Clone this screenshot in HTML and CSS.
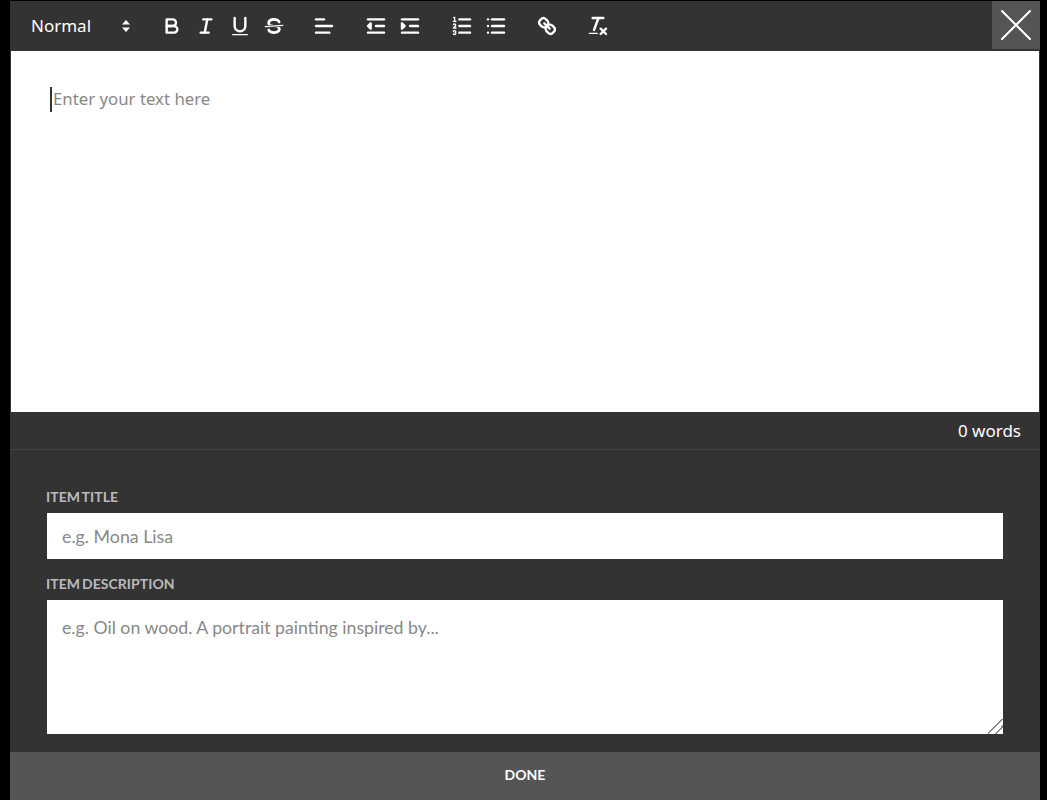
FILE: index.html
```html
<!DOCTYPE html>
<html lang="en">
<head>
<meta charset="utf-8">
<title>Item editor</title>
<link rel="stylesheet" href="styles.css">
</head>
<body>
<main class="modal">
  <div class="toolbar">
    <div class="picker"><span class="picker-label">Normal</span>
      <svg class="picker-arrows" viewBox="0 0 10 14"><path d="M5 1l4 4.5H1zM5 13L1 8.5h8z"/></svg>
    </div>
    <div class="group group-first">
      <button class="tool" aria-label="Bold"><svg viewBox="0 0 18 18"><path d="M5,4H9.5A2.5,2.5,0,0,1,12,6.5v0A2.5,2.5,0,0,1,9.5,9H5A0,0,0,0,1,5,9V4A0,0,0,0,1,5,4Z"/><path d="M5,9h5.5A2.5,2.5,0,0,1,13,11.5v0A2.5,2.5,0,0,1,10.5,14H5a0,0,0,0,1,0,0V9A0,0,0,0,1,5,9Z"/></svg></button>
      <button class="tool" aria-label="Italic"><svg viewBox="0 0 18 18"><line x1="7" x2="13" y1="4" y2="4"/><line x1="5" x2="11" y1="14" y2="14"/><line x1="8" x2="10" y1="14" y2="4"/></svg></button>
      <button class="tool" aria-label="Underline"><svg viewBox="0 0 18 18"><path d="M5,3V9a4.012,4.012,0,0,0,4,4H9a4.012,4.012,0,0,0,4-4V3"/><rect class="fill" height="1" rx=".5" ry=".5" width="12" x="3" y="15"/></svg></button>
      <button class="tool" aria-label="Strike"><svg viewBox="0 0 18 18"><line class="thin" x1="15.5" x2="2.5" y1="8.5" y2="9.5"/><path class="fill" d="M9.007,8C6.542,7.791,6,7.519,6,6.5,6,5.792,7.283,5,9,5c1.571,0,2.765.679,2.969,1.309a1,1,0,0,0,1.9-.617C13.356,4.106,11.354,3,9,3,6.2,3,4,4.538,4,6.5a3.2,3.2,0,0,0,.5,1.843Z"/><path class="fill" d="M8.984,10C11.457,10.208,12,10.479,12,11.5c0,.708-1.283,1.5-3,1.5-1.571,0-2.765-.679-2.969-1.309a1,1,0,1,0-1.9.617C4.644,13.894,6.646,15,9,15c2.8,0,5-1.538,5-3.5a3.2,3.2,0,0,0-.5-1.843Z"/></svg></button>
    </div>
    <div class="group">
      <button class="tool" aria-label="Align"><svg viewBox="0 0 18 18"><line x1="3" x2="15" y1="9" y2="9"/><line x1="3" x2="13" y1="14" y2="14"/><line x1="3" x2="9" y1="4" y2="4"/></svg></button>
    </div>
    <div class="group">
      <button class="tool" aria-label="Outdent"><svg viewBox="0 0 18 18"><line x1="3" x2="15" y1="14" y2="14"/><line x1="3" x2="15" y1="4" y2="4"/><line x1="9" x2="15" y1="9" y2="9"/><polyline class="solid" points="5 7 5 11 3 9 5 7"/></svg></button>
      <button class="tool" aria-label="Indent"><svg viewBox="0 0 18 18"><line x1="3" x2="15" y1="14" y2="14"/><line x1="3" x2="15" y1="4" y2="4"/><line x1="9" x2="15" y1="9" y2="9"/><polyline class="solid" points="3 7 3 11 5 9 3 7"/></svg></button>
    </div>
    <div class="group group-lists">
      <button class="tool" aria-label="Ordered list"><svg viewBox="0 0 18 18"><line x1="7" x2="15" y1="4" y2="4"/><line x1="7" x2="15" y1="9" y2="9"/><line x1="7" x2="15" y1="14" y2="14"/><line class="thin" x1="2.5" x2="4.5" y1="5.5" y2="5.5"/><path class="fill" d="M3.5,6A0.5,0.5,0,0,1,3,5.5V3.085l-0.276.138A0.5,0.5,0,0,1,2.053,3c-0.124-.247-0.023-0.324.224-0.447l1-.5A0.5,0.5,0,0,1,4,2.5v3A0.5,0.5,0,0,1,3.5,6Z"/><path class="thin" d="M4.5,10.5h-2c0-.234,1.85-1.076,1.85-2.234A0.959,0.959,0,0,0,2.5,8.156"/><path class="thin" d="M2.5,14.846a0.959,0.959,0,0,0,1.85-.109A0.7,0.7,0,0,0,3.75,14a0.688,0.688,0,0,0,.6-0.736,0.959,0.959,0,0,0-1.85-.109"/></svg></button>
      <button class="tool" aria-label="Bullet list"><svg viewBox="0 0 18 18"><line x1="6" x2="15" y1="4" y2="4"/><line x1="6" x2="15" y1="9" y2="9"/><line x1="6" x2="15" y1="14" y2="14"/><line x1="3" x2="3" y1="4" y2="4"/><line x1="3" x2="3" y1="9" y2="9"/><line x1="3" x2="3" y1="14" y2="14"/></svg></button>
    </div>
    <div class="group group-link">
      <button class="tool" aria-label="Link"><svg viewBox="0 0 18 18"><line x1="7" x2="11" y1="7" y2="11"/><path d="M8.9,4.577a3.476,3.476,0,0,1,.36,4.679A3.476,3.476,0,0,1,4.577,8.9C3.185,7.5,2.035,6.4,4.217,4.217S7.5,3.185,8.9,4.577Z"/><path d="M13.423,9.1a3.476,3.476,0,0,0-4.679-.36,3.476,3.476,0,0,0,.36,4.679c1.392,1.392,2.5,2.542,4.679.36S14.815,10.5,13.423,9.1Z"/></svg></button>
    </div>
    <div class="group">
      <button class="tool" aria-label="Clear formatting"><svg viewBox="0 0 18 18"><line x1="5" x2="13" y1="3" y2="3"/><line x1="6" x2="9.35" y1="12" y2="3"/><line x1="11" x2="15" y1="11" y2="15"/><line x1="15" x2="11" y1="11" y2="15"/><rect class="fill" height="1" rx=".5" ry=".5" width="7" x="2" y="14"/></svg></button>
    </div>
    <button class="close" aria-label="Close"><svg viewBox="0 0 30 30"><path d="M1 1l28 28M29 1L1 29"/></svg></button>
  </div>
  <div class="editor"><p class="placeholder">Enter your text here</p></div>
  <div class="status">0 words</div>
  <form class="fields">
    <label class="label" for="title">Item title</label>
    <input class="input" id="title" type="text" placeholder="e.g. Mona Lisa">
    <label class="label label-second" for="desc">Item description</label>
    <textarea class="input area" id="desc" placeholder="e.g. Oil on wood. A portrait painting inspired by..."></textarea>
  </form>
  <button class="done">Done</button>
</main>
</body>
</html>
```
FILE: styles.css
```css
* { box-sizing: border-box; }
html, body { margin: 0; height: 100%; }
body {
  background: #000;
  padding: 1px 0 0 10px;
  overflow: hidden;
  font-family: "Noto Sans", sans-serif;
}
.modal {
  width: 1030px;
  height: 799px;
  background: #333;
  display: flex;
  flex-direction: column;
}
.toolbar {
  height: 50px;
  flex: none;
  display: flex;
  align-items: center;
  padding-left: 21px;
}
.picker {
  width: 101px;
  display: flex;
  align-items: center;
  justify-content: space-between;
  color: #fff;
  font-size: 17px;
  padding-right: 1px;
  margin-right: 23px;
}
.picker-label { padding-bottom: 2px; }
.picker-arrows { width: 10px; height: 14px; fill: #fff; }
.group { display: flex; margin-right: 18px; }
.group-first { margin-right: 16px; }
.group-lists { margin-right: 17px; }
.group-link { margin-right: 17px; }
.tool {
  width: 34px;
  height: 34px;
  padding: 5px;
  border: 0;
  background: none;
  display: block;
}
.tool svg {
  display: block;
  width: 24px;
  height: 24px;
  fill: none;
  stroke: #fff;
  stroke-width: 1.8;
  stroke-linecap: round;
  stroke-linejoin: round;
}
.tool svg .fill { fill: #fff; stroke: none; }
.tool svg .thin { stroke-width: 1; }
.tool svg .solid { fill: #fff; }
.close {
  margin-left: auto;
  width: 48px;
  height: 48px;
  align-self: flex-start;
  background: #555;
  border: 0;
  padding: 9px;
}
.close svg {
  display: block;
  width: 30px;
  height: 30px;
  stroke: #fff;
  stroke-width: 2;
  stroke-linecap: round;
}
.editor {
  height: 361px;
  flex: none;
  margin: 0 1px;
  background: #fff;
  padding: 36px 39px;
}
.placeholder {
  margin: 0;
  height: 25px;
  line-height: 24px;
  border-left: 2px solid #333;
  padding-left: 1px;
  font-size: 16.8px;
  color: #888;
}
.status {
  height: 38px;
  flex: none;
  border-bottom: 1px solid #444;
  text-align: right;
  color: #fff;
  font-size: 17px;
  line-height: 37px;
  padding-right: 19px;
}
.fields {
  flex: 1;
  display: flex;
  flex-direction: column;
  padding: 38px 36px 0;
}
.label {
  display: block;
  color: #bbb;
  font-family: "Lato", sans-serif;
  font-weight: 700;
  font-size: 14px;
  line-height: 17px;
  word-spacing: -1.5px;
  letter-spacing: 0.05px;
  text-transform: uppercase;
  margin-bottom: 7px;
}
.label-second { margin-top: 15px; }
.input {
  display: block;
  width: 100%;
  height: 48px;
  flex: none;
  border: 1px solid #333;
  background: #fff;
  padding: 0 15px;
  font-family: "Lato", sans-serif;
  font-size: 17.8px;
  color: #333;
  border-radius: 0;
  outline: 0;
}
.input::placeholder { color: #888; opacity: 1; }
.area {
  height: 136px;
  padding: 16px 15px;
  font-size: 17.7px;
  line-height: 24px;
  resize: vertical;
}
.area::-webkit-resizer {
  background: linear-gradient(135deg,
    transparent 46%, #888 46%, #888 53%, transparent 53%,
    transparent 70%, #888 70%, #888 77%, transparent 77%);
}
.done {
  height: 48px;
  flex: none;
  background: #555;
  border: 0;
  padding: 0 0 3px;
  color: #fff;
  font-family: "Lato", sans-serif;
  font-weight: 700;
  font-size: 14px;
  text-transform: uppercase;
}
```
